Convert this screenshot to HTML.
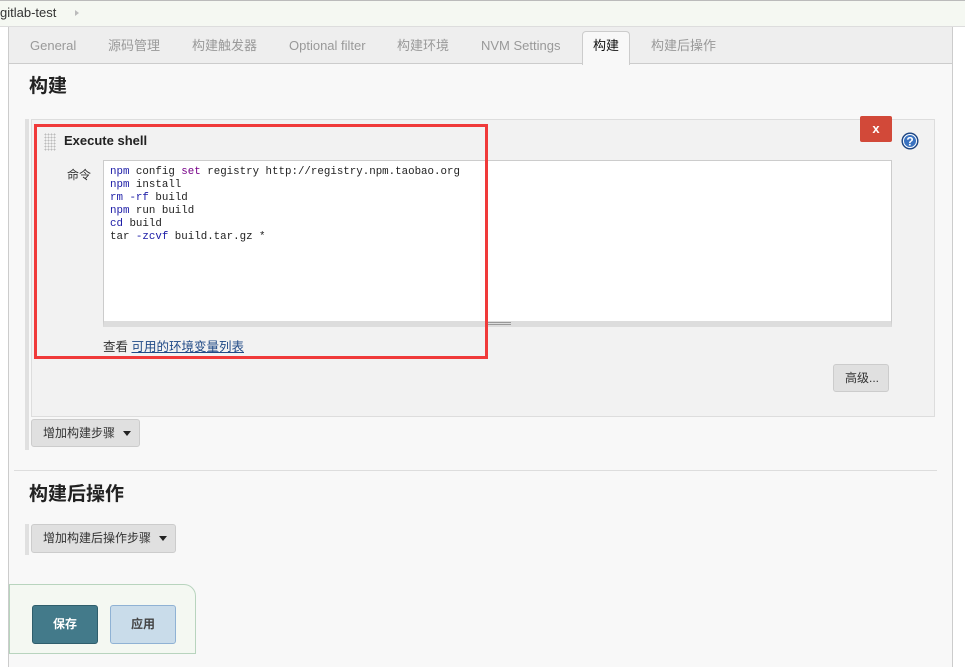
<!DOCTYPE html>
<html><head><meta charset="utf-8"><style>
*{margin:0;padding:0;box-sizing:border-box}
body{width:965px;height:647px;overflow:hidden;background:#fff;font-family:"Liberation Sans","Noto Sans CJK SC",sans-serif;font-size:13px;color:#333;position:relative}
.abs{position:absolute}
.top{left:0;top:0;width:965px;height:27px;background:#f5f8f2;border-top:1px solid #bbb;border-bottom:1px solid #ddd}
.panel{left:8px;top:27px;width:945px;height:640px;background:#f8f8f8;border-left:1px solid #ccc;border-right:1px solid #ccc}
.tabs{left:9px;top:27px;width:943px;height:37px;background:#eee;border-bottom:1px solid #ccc}
.tab{top:37px;font-size:13px;color:#999;line-height:18px;height:18px}
h2{position:absolute;font-size:19px;font-weight:bold;color:#222}
.btn{position:absolute;background:#e0e0e0;border:1px solid #ccc;border-radius:3px;font-size:12px;color:#333;padding-left:11px;line-height:27px}
.caret{display:inline-block;border-left:4px solid transparent;border-right:4px solid transparent;border-top:5px solid #222;vertical-align:middle;margin-left:8px}
pre{font-family:"Liberation Mono",monospace;font-size:10.8px;line-height:13px;color:#222}
.k{color:#1a1aa6}.p{color:#770088}
</style></head><body>
<div class="abs top"></div>
<div class="abs" style="left:0;top:5px;font-size:13px;color:#333">gitlab-test</div>
<div class="abs" style="left:75px;top:10px;border-left:4px solid #bbb;border-top:3px solid transparent;border-bottom:3px solid transparent"></div>
<div class="abs panel"></div>
<div class="abs tabs"></div>
<div class="abs tab" style="left:30px">General</div>
<div class="abs tab" style="left:108px">源码管理</div>
<div class="abs tab" style="left:192px">构建触发器</div>
<div class="abs tab" style="left:289px">Optional filter</div>
<div class="abs tab" style="left:397px">构建环境</div>
<div class="abs tab" style="left:481px">NVM Settings</div>
<div class="abs" style="left:582px;top:31px;width:48px;height:34px;background:#f8f8f8;border:1px solid #ccc;border-bottom:none;border-radius:4px 4px 0 0"></div>
<div class="abs tab" style="left:593px;color:#111">构建</div>
<div class="abs tab" style="left:651px">构建后操作</div>
<h2 style="left:29px;top:71px">构建</h2>
<div class="abs" style="left:25px;top:119px;width:4px;height:331px;background:#e0e0e0"></div>
<div class="abs" style="left:31px;top:119px;width:904px;height:298px;background:#f2f2f2;border:1px solid #ddd"></div>
<div class="abs" style="left:44px;top:133px;width:12px;height:18px;background-image:radial-gradient(#bbb 0.8px,transparent 1px);background-size:3px 3px"></div>
<div class="abs" style="left:64px;top:133px;font-weight:bold;font-size:13px;color:#222">Execute shell</div>
<div class="abs" style="left:860px;top:116px;width:32px;height:26px;background:#d24939;border-radius:2px;color:#fff;font-weight:bold;text-align:center;line-height:26px;font-size:13px">x</div>
<svg class="abs" style="left:901px;top:132px" width="18" height="18" viewBox="0 0 18 18"><circle cx="9" cy="9" r="8" fill="#2e62a8" stroke="#1b3f7a"/><circle cx="9" cy="9" r="6.5" fill="#3a72c0" stroke="#fff" stroke-width="1"/><text x="9" y="13.5" text-anchor="middle" font-size="12" font-weight="bold" fill="#fff" font-family="Liberation Sans">?</text></svg>
<div class="abs" style="left:67px;top:166px;font-size:12px">命令</div>
<div class="abs" style="left:103px;top:160px;width:789px;height:167px;background:#fff;border:1px solid #ccc;border-bottom:6px solid #ddd;padding:5px 6px">
<pre><span class="k">npm</span> config <span class="p">set</span> registry http://registry.npm.taobao.org
<span class="k">npm</span> install
<span class="k">rm</span> <span class="k">-rf</span> build
<span class="k">npm</span> run build
<span class="k">cd</span> build
tar <span class="k">-zcvf</span> build.tar.gz *</pre></div>
<div class="abs" style="left:485px;top:322px;width:26px;height:3px;border-top:1px solid #999;border-bottom:1px solid #999"></div>
<div class="abs" style="left:34px;top:124px;width:454px;height:235px;border:3px solid #f03a3a"></div>
<div class="abs" style="left:103px;top:336px;font-size:12.5px">查看 <span style="color:#204a87;text-decoration:underline">可用的环境变量列表</span></div>
<div class="btn" style="left:833px;top:364px;width:56px;height:28px">高级...</div>
<div class="btn" style="left:31px;top:419px;width:109px;height:28px">增加构建步骤<span class="caret"></span></div>
<div class="abs" style="left:14px;top:470px;width:923px;height:1px;background:#ddd"></div>
<h2 style="left:29px;top:479px">构建后操作</h2>
<div class="abs" style="left:25px;top:524px;width:4px;height:31px;background:#e0e0e0"></div>
<div class="btn" style="left:31px;top:524px;width:145px;height:29px">增加构建后操作步骤<span class="caret"></span></div>
<div class="abs" style="left:9px;top:584px;width:187px;height:70px;background:#f4f8f2;border:1px solid #b8d4be;border-radius:0 12px 0 0"></div>
<div class="abs" style="left:32px;top:605px;width:66px;height:39px;background:#437a8a;border:1px solid #2f5e6c;border-radius:3px;color:#fff;font-weight:bold;text-align:center;line-height:37px;font-size:12px">保存</div>
<div class="abs" style="left:110px;top:605px;width:66px;height:39px;background:#c9dcea;border:1px solid #8fb2d4;border-radius:3px;color:#444;font-weight:bold;text-align:center;line-height:37px;font-size:12px">应用</div>
</body></html>
